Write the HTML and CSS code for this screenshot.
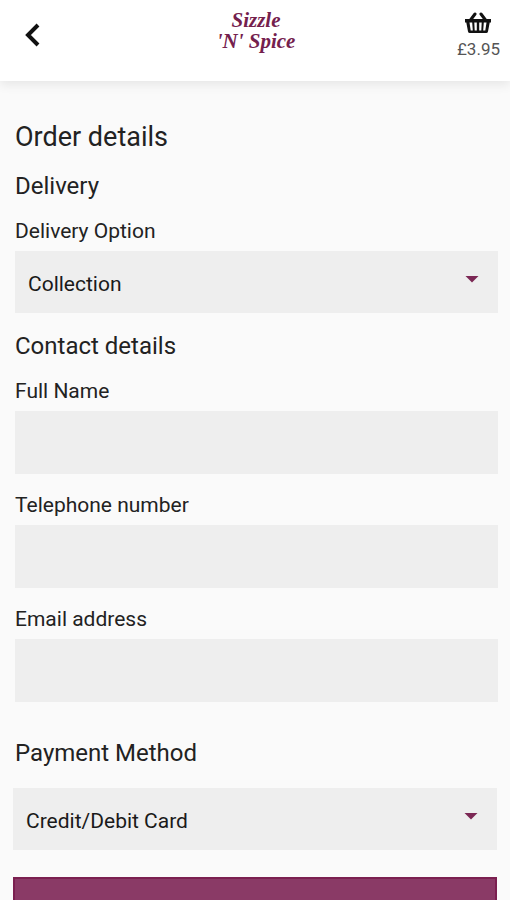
FILE: index.html
```html
<!DOCTYPE html>
<html lang="en">
<head>
<meta charset="utf-8">
<meta name="viewport" content="width=device-width, initial-scale=1">
<title>Order details</title>
<link rel="stylesheet" href="styles.css">
</head>
<body>
<header class="topbar">
  <button class="back" type="button" aria-label="Back">
    <svg width="16" height="24" viewBox="0 0 16 24"><path d="M14 2 4 12l10 10" fill="none" stroke="#111" stroke-width="4"/></svg>
  </button>
  <a class="logo" href="#"><span>Sizzle</span><span>'N' Spice</span></a>
  <a class="basket" href="#">
    <svg width="28" height="22" viewBox="0 0 28 22" aria-hidden="true">
      <path d="M11 2 6.500 8M17 2 21.500 8" fill="none" stroke="#111" stroke-width="3" stroke-linecap="round"/>
      <path fill="#111" fill-rule="evenodd" d="M1 7h26v3.500h-1.300L24 19.500Q23.700 21 22.200 21H5.800Q4.300 21 4 19.500L2.300 10.500H1zM5.500 10.500l1.200 8h2.100l-.6-8zM10.300 10.500l.4 8h2.100v-8zM15.200 10.500v8h2.100l.4-8zM19.800 10.500l-.6 8h2.100l1.200-8z"/>
    </svg>
    <span>£3.95</span>
  </a>
</header>
<main>
  <form class="order">
    <h1>Order details</h1>
    <h2>Delivery</h2>
    <label for="delivery">Delivery Option</label>
    <div class="select">
      <select id="delivery"><option>Collection</option><option>Delivery</option></select>
    </div>
    <h2>Contact details</h2>
    <label for="name">Full Name</label>
    <input id="name" type="text">
    <label for="phone">Telephone number</label>
    <input id="phone" type="tel">
    <label for="email">Email address</label>
    <input id="email" type="email">
    <div class="payment">
      <h2 id="payment-title">Payment Method</h2>
      <div class="select">
        <select aria-labelledby="payment-title"><option>Credit/Debit Card</option><option>Cash</option></select>
      </div>
      <button class="submit" type="submit" aria-label="Place order"></button>
    </div>
  </form>
</main>
</body>
</html>
```
FILE: styles.css
```css
* { box-sizing: border-box; }

body {
  margin: 0;
  background: #fafafa;
  color: #222;
  font-family: Roboto, "Liberation Sans", sans-serif;
}

.topbar {
  display: grid;
  grid-template-columns: 1fr auto 1fr;
  align-items: start;
  height: 81px;
  padding: 10px 10px 0 12px;
  background: #fff;
  box-shadow: 0 4px 10px rgba(0, 0, 0, 0.08);
}

.back {
  justify-self: start;
  margin: 13px 0 0 12px;
  padding: 0;
  border: 0;
  background: none;
}

.back svg,
.basket svg { display: block; }

.logo {
  display: grid;
  justify-items: center;
  color: #74204d;
  font: italic bold 21px/21px "Liberation Serif", serif;
  text-decoration: none;
}

.basket {
  display: grid;
  justify-items: center;
  justify-self: end;
  gap: 5px;
  padding-top: 2px;
  color: #555;
  font-size: 17px;
  line-height: 20px;
  text-decoration: none;
}

.order {
  display: flex;
  flex-direction: column;
  padding: 40px 12px 0 15px;
}

h1, h2 {
  margin: 0;
  font-weight: 400;
}

h1 {
  font-size: 27px;
  line-height: 32px;
}

h2 {
  margin-top: 19px;
  font-size: 24px;
  line-height: 28px;
}

label {
  margin: 19px 0 8px;
  font-size: 21px;
  line-height: 24px;
}

input,
select {
  width: 100%;
  border: 0;
  border-radius: 0;
  background: #eee;
  color: #1a1a1a;
  font: 21px/24px Roboto, "Liberation Sans", sans-serif;
}

input {
  height: 63px;
  padding: 0 13px;
}

.select {
  display: grid;
  align-items: center;
}

.select > *,
.select::after { grid-area: 1 / 1; }

select {
  height: 62px;
  padding: 4px 40px 0 13px;
  appearance: none;
}

.select::after {
  justify-self: end;
  width: 14px;
  height: 7px;
  margin: 0 19px 6px 0;
  background: #7c2855;
  clip-path: polygon(0 0, 100% 0, 50% 100%);
  content: "";
  pointer-events: none;
}

.payment {
  display: grid;
  gap: 27px;
  margin: 18px 1px 0 -2px;
}

.payment h2 {
  margin-bottom: -6px;
  padding-left: 2px;
}

.submit {
  height: 62px;
  border: 2px solid #7b1f50;
  background: #8a3a66;
}
```
